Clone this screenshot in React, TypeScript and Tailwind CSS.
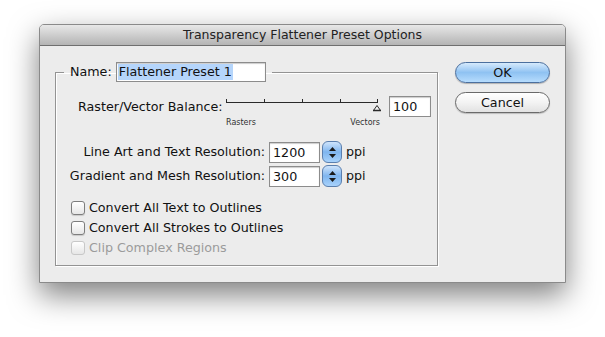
import React from 'react';

const font = { fontFamily: '"DejaVu Sans", "Liberation Sans", sans-serif' };

const Checkbox = ({ label, disabled }: { label: string; disabled?: boolean }) => (
  <div className="flex items-center h-[20px]">
    <span
      className={`w-[14px] h-[14px] rounded-[3px] border bg-gradient-to-b from-white to-[#e6e6e6] ${
        disabled ? 'border-[#c8c8c8]' : 'border-[#7d7d7d] shadow-[0_1px_1px_rgba(0,0,0,0.15)]'
      }`}
    />
    <span className={`ml-[4px] ${disabled ? 'text-[#9b9b9b]' : 'text-[#111]'}`}>{label}</span>
  </div>
);

const Stepper = () => (
  <div className="ml-[2px] w-[20px] h-[22px] rounded-[6px] border border-[#5b7fae] bg-gradient-to-b from-[#cfe4fb] via-[#7fb5ee] to-[#a8d2fb] flex flex-col items-center justify-center gap-[3px]">
    <svg width="7" height="4" viewBox="0 0 7 4">
      <polygon points="0,4 3.5,0 7,4" fill="#1a1a1a" />
    </svg>
    <svg width="7" height="4" viewBox="0 0 7 4">
      <polygon points="0,0 3.5,4 7,0" fill="#1a1a1a" />
    </svg>
  </div>
);

const ResRow = ({ label, value, className }: { label: string; value: string; className?: string }) => (
  <div className={`flex items-center ${className ?? ''}`}>
    <span className="w-[209px] text-right">{label}</span>
    <div className="ml-[4px] w-[51px] h-[21px] bg-white border border-[#8c8c8c] shadow-[inset_0_1px_1px_rgba(0,0,0,0.2)] pl-[3px] leading-[19px]">
      {value}
    </div>
    <Stepper />
    <span className="ml-[4px]">ppi</span>
  </div>
);

export default function App() {
  return (
    <div className="w-[605px] h-[337px] bg-white pl-[39px] pt-[24px] text-[12.7px] text-[#111]" style={font}>
      <div className="w-[527px] h-[259px] bg-[#ececec] border border-[#8a8a8a] rounded-t-[5px] shadow-[0_12px_30px_rgba(0,0,0,0.5)] flex flex-col">
        {/* Title bar */}
        <div className="h-[21px] rounded-t-[4px] bg-gradient-to-b from-[#e8e8e8] to-[#b4b4b4] border-b border-[#6f6f6f] flex items-center justify-center text-[#222] text-[12.5px]">
          Transparency Flattener Preset Options
        </div>

        <div className="flex pl-[15px] pt-[16px]">
          {/* Group box */}
          <fieldset className="w-[383px] h-[204px] border border-[#939393] shadow-[1px_1px_0_#ffffff,inset_1px_1px_0_#ffffff] px-0 pt-0 m-0">
            <legend className="ml-[8px] px-[6px] flex items-center">
              <span>Name:</span>
              <div className="ml-[4px] w-[150px] h-[20px] bg-white border border-[#8c8c8c] shadow-[inset_0_1px_1px_rgba(0,0,0,0.2)] pl-[1px] flex items-center">
                <span className="bg-[#b5d5fb] px-[1px] leading-[16px]">Flattener Preset 1</span>
              </div>
            </legend>

            {/* Raster / Vector balance */}
            <div className="flex items-start mt-[14px] pl-[22px]">
              <span className="w-[148px] leading-[21px]">Raster/Vector Balance:</span>
              <div className="w-[156px]">
                <svg width="156" height="16" viewBox="0 0 156 16" className="block">
                  <line x1="0" y1="6.5" x2="152" y2="6.5" stroke="#2a2a2a" strokeWidth="1" />
                  {[0.5, 38.5, 76.5, 114.5, 151.5].map((x) => (
                    <line key={x} x1={x} y1="3" x2={x} y2="7" stroke="#2a2a2a" strokeWidth="1" />
                  ))}
                  <polygon points="147.5,14.5 151,9.5 154.5,14.5" fill="#f4f4f4" stroke="#2a2a2a" strokeWidth="1" />
                  <line x1="147" y1="14.5" x2="155" y2="14.5" stroke="#2a2a2a" strokeWidth="1.5" />
                </svg>
                <div className="flex justify-between mt-[6px] text-[8px] leading-[10px] text-[#333] pr-[2px]">
                  <span>Rasters</span>
                  <span>Vectors</span>
                </div>
              </div>
              <div className="ml-[7px] w-[42px] h-[21px] bg-white border border-[#8c8c8c] shadow-[inset_0_1px_1px_rgba(0,0,0,0.2)] pl-[3px] leading-[19px]">
                100
              </div>
            </div>

            <ResRow label="Line Art and Text Resolution:" value="1200" className="mt-[13px]" />
            <ResRow label="Gradient and Mesh Resolution:" value="300" className="mt-[2px]" />

            <div className="flex flex-col mt-[11px] pl-[15px]">
              <Checkbox label="Convert All Text to Outlines" />
              <Checkbox label="Convert All Strokes to Outlines" />
              <Checkbox label="Clip Complex Regions" disabled />
            </div>
          </fieldset>

          {/* Buttons */}
          <div className="ml-[17px] flex flex-col">
            <button className="w-[95px] h-[21px] rounded-full border border-[#4b6f9e] bg-gradient-to-b from-[#d6eafc] via-[#8fc2f2] to-[#b6dcfd] shadow-[0_1px_1px_rgba(0,0,0,0.25)] text-[#111] leading-[19px]">
              OK
            </button>
            <button className="mt-[9px] w-[95px] h-[21px] rounded-full border border-[#6a6a6a] bg-gradient-to-b from-white via-[#f3f3f3] to-[#e2e2e2] shadow-[0_1px_1px_rgba(0,0,0,0.2)] text-[#111] leading-[19px]">
              Cancel
            </button>
          </div>
        </div>
      </div>
    </div>
  );
}
